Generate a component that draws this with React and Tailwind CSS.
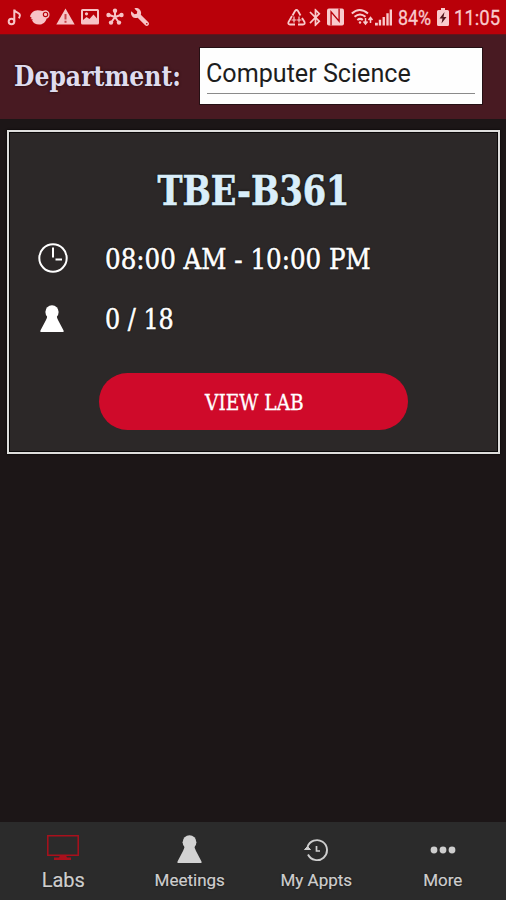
import React from "react";
import { FaWrench } from "react-icons/fa";
import { MdBluetooth } from "react-icons/md";

const slab = "font-['Roboto_Slab','DejaVu_Serif_Condensed','DejaVu_Serif',serif]";

// Status bar, left side
function NotificationIcons() {
  return (
    <div className="flex items-center h-[34px] text-[#f7c3c6]">
      <svg className="w-4 h-[18px]" viewBox="0 0 16 18" fill="none" stroke="currentColor" strokeWidth="2">
        <circle cx="4.5" cy="13.5" r="2.8" />
        <path d="M7.3 13.5V1.5c0 3.200 5.800 2.500 5.600 6-.1 1.2-.5 2-1.2 2.700" />
      </svg>
      <svg className="w-[20px] h-[18px] ml-[7px]" viewBox="0 0 21 18">
        <path fill="currentColor" d="M0 8.5C1 4.500 4 2 8 1.800c2 0 3.700.400 5 1L16 2c3 0 4.700 2.300 4.500 4.800-.2 2.200-1.500 3.400-3 3.700-1 3.800-4 6.400-8 6.400-3.500 0-6-1.600-7.300-4.200L3 11.500.5 11l1.500-1z" />
        <circle cx="16.300" cy="6.300" r="2.300" fill="none" stroke="#b90009" strokeWidth="1.200" />
      </svg>
      <svg className="w-[19px] h-[18px] ml-[6px]" viewBox="0 0 19 18">
        <path fill="currentColor" d="M9.500.5 18.700 16.500H.3z" />
        <path stroke="#c8444a" strokeWidth="2" d="M9.500 6v5.500M9.500 12.800v2" />
      </svg>
      <svg className="w-[18px] h-[18px] ml-[6px]" viewBox="0 0 18 18">
        <path fill="currentColor" fillRule="evenodd" d="M1.500 1h15Q18 1 18 2.500v12.500q0 1.500-1.500 1.500h-15Q0 16.500 0 15V2.500Q0 1 1.500 1zM2 3v9l3.500-3 3 2 4-4.500 3.500 4V3z" />
        <circle cx="5.500" cy="5.800" r="1.600" fill="currentColor" />
      </svg>
      <svg className="w-[18px] h-[18px] ml-[7px]" viewBox="0 0 18 18" fill="none" stroke="currentColor" strokeWidth="2">
        <path d="M9 9V3M9 9 3.300 7M9 9l5.700-2M9 9l-3.500 5M9 9l3.500 5" />
        <g fill="currentColor" strokeWidth="0">
          <circle cx="9" cy="2.700" r="2.200" />
          <circle cx="2.500" cy="7" r="2.200" />
          <circle cx="15.500" cy="7" r="2.200" />
          <circle cx="5" cy="14.600" r="2.200" />
          <circle cx="13" cy="14.600" r="2.200" />
        </g>
      </svg>
      <FaWrench className="w-[18px] h-[18px] ml-[7px] -scale-x-100" />
    </div>
  );
}

// Status bar, right side
function SystemIcons() {
  return (
    <div className="flex items-center h-[34px] text-[#f9cbcd]">
      <svg className="w-[19px] h-[17px]" viewBox="0 0 19 17" fill="none" stroke="currentColor" strokeWidth="1.800">
        <path d="M5.500 6.500 8 2q1.500-2 3 0l2.500 4.500M15 9l2.500 4q.8 2.500-1.500 2.500h-5M8 15.500H3Q.7 15.500 1.500 13L5 7" />
        <path d="M7 7.500v6M4.500 11h5M12 7.500v6M10 11h4.500" strokeWidth="1.200" />
      </svg>
      <MdBluetooth className="w-[21px] h-[21px] -ml-px" />
      <svg className="w-[17px] h-[18px] ml-px" viewBox="0 0 18 18">
        <path fill="currentColor" d="M2 0h14q2 0 2 2v14q0 2-2 2H2q-2 0-2-2V2q0-2 2-2z" />
        <path d="M4.300 18V3.500l8.500 10V0" fill="none" stroke="#b90009" strokeWidth="1.400" />
      </svg>
      <svg className="w-[23px] h-[18px] ml-[7px]" viewBox="0 0 23 18" fill="none" stroke="currentColor" strokeWidth="2">
        <path d="M.8 5.500Q8.500-1.500 17 5.500M3.500 8.800q5.500-4.500 11 0M6.300 12q3-2.300 5.500 0" />
        <circle cx="9" cy="14.500" r="1.200" fill="currentColor" stroke="none" />
        <path d="M14.500 10v5.500M12.500 13.500l2 2.500 2-2.500M19.500 15v-5M17.500 12l2-2.500 2 2.500" strokeWidth="1.500" />
      </svg>
      <svg className="w-[17px] h-[17px] ml-px" viewBox="0 0 18 17" fill="currentColor">
        <path d="M0 14h3v3H0zM4 11h2.500v6H4zM8 8h2.500v9H8zM12 4h2.500v13H12zM15.500 0H18v17h-2.500z" />
      </svg>
      <span className="ml-[6px] w-[34px] h-[34px] flex items-center">
        <span className="text-[20.500px] leading-[34px] pt-[1px] origin-left scale-x-[0.87] whitespace-nowrap [-webkit-text-stroke:0.3px_#f9cbcd]">84%</span>
      </span>
      <svg className="w-[12px] h-[18px] ml-[5px]" viewBox="0 0 12 18">
        <path fill="currentColor" d="M4 0h4v2h2.500Q12 2 12 3.500v13q0 1.500-1.500 1.500h-9Q0 18 0 16.500v-13Q0 2 1.500 2H4z" />
        <path fill="#50151a" d="M7.500 4 2.500 10.500h3L4.500 15.500l5-6.500h-3z" />
      </svg>
      <span className="ml-[5px] w-[47px] h-[34px] flex items-center">
        <span className="text-[21px] leading-[34px] pt-[1px] origin-left scale-x-[0.88] whitespace-nowrap [-webkit-text-stroke:0.3px_#f9cbcd]">11:05</span>
      </span>
    </div>
  );
}

function PawnIcon({ className }) {
  return (
    <svg className={className} viewBox="0 0 24 28" fill="currentColor">
      <circle cx="12" cy="7.200" r="6.900" />
      <path d="M7.300 10h9.400q.3 3.500 1.800 6L24 26.500V28H0v-1.500L5.500 16Q7 13.500 7.300 10z" />
    </svg>
  );
}

function ClockIcon() {
  return (
    <svg className="w-[30px] h-[30px]" viewBox="0 0 30 30" fill="none" stroke="currentColor" strokeWidth="2">
      <circle cx="15" cy="15" r="13.700" />
      <path d="M15 4.500V14.500M17.500 16.500h6.500" />
    </svg>
  );
}

const tabs = [
  {
    label: "Labs",
    labelClass: "text-[20px] top-0",
    icon: (
      <svg className="w-[32px] h-[26px] -mt-1 text-[#a9101c]" viewBox="0 0 32 26" fill="none" stroke="currentColor" strokeWidth="1.500">
        <path d="M.8.800h30.400v19.400H.8z" />
        <path d="M13 20.500h6l1 2h4v2.500H7v-2.500h5z" fill="currentColor" strokeWidth="0" />
      </svg>
    ),
  },
  {
    label: "Meetings",
    labelClass: "text-[17px] top-0",
    icon: <PawnIcon className="w-[25px] h-[28px] -mt-[2px] text-[#d2d2d2]" />,
  },
  {
    label: "My Appts",
    labelClass: "text-[17px] top-0",
    icon: (
      <svg className="w-[24px] h-[24px]" viewBox="0 0 24 24" fill="none" stroke="currentColor" strokeWidth="1.900">
        <path d="M3.500 9A10 10 0 1 1 4 16.500" />
        <path d="M.500 11.500 3.500 8.500l3 3z" fill="currentColor" strokeWidth="1" />
        <path d="M12.500 8v5H16" strokeWidth="1.700" />
      </svg>
    ),
  },
  {
    label: "More",
    labelClass: "text-[17px] top-0",
    icon: (
      <svg className="w-[26px] h-[8px]" viewBox="0 0 26 8" fill="currentColor">
        <circle cx="4" cy="4" r="3.400" />
        <circle cx="13" cy="4" r="3.400" />
        <circle cx="22" cy="4" r="3.400" />
      </svg>
    ),
  },
];

export default function App() {
  return (
    <div className="w-[506px] h-[900px] flex flex-col overflow-hidden bg-[#1c1617] font-[Roboto,sans-serif]">
      <div className="h-[34px] flex justify-between pl-[7px] pr-[5px] bg-[#b90009]">
        <NotificationIcons />
        <SystemIcons />
      </div>

      {/* Department picker */}
      <header className="h-[85px] flex items-start bg-[#481a22] border-t border-[#65131b]">
        <div className="w-[199px] pl-[14px] pt-[24px]">
          <span className={`${slab} inline-block font-bold text-[28px] leading-[36px] whitespace-nowrap origin-left scale-x-[0.935] text-[#dfdcee] [text-shadow:0_0_3px_#1c0609]`}>
            Department:
          </span>
        </div>
        <div className="w-[284px] h-[58px] mt-[12px] px-[7px] bg-[#fefefe] border border-[#251014]">
          <div className="h-[46px] pt-[8px] border-b border-[#8a8a8a] text-[25.500px] leading-[34px] text-[#1d1d1d] whitespace-nowrap">
            <span className="inline-block origin-left scale-x-[0.985] -ml-px">Computer Science</span>
          </div>
        </div>
      </header>

      <main className="flex-1 pl-[7px] pr-[6px] pt-[11px]">
        <section className="h-[324px] border-2 border-[#dededc] bg-[#2c2828] text-white flex flex-col [box-shadow:0_0_2px_#000,inset_0_0_0_1px_#0b0909]">
          <div className="mt-[33px] h-[52px] flex justify-center">
            <h1 className={`${slab} font-bold text-[41px] leading-[52px] whitespace-nowrap scale-x-[0.91] text-[#d9eefa] [text-shadow:0_0_3px_#000] [-webkit-text-stroke:0.6px_#d9eefa]`}>
              TBE-B361
            </h1>
          </div>
          <div className="mt-[11px] h-[60px] flex items-center pl-[29px]">
            <ClockIcon />
            <span className={`${slab} pt-[4px] ml-[37px] text-[27.500px] whitespace-nowrap origin-left scale-x-[0.993] [text-shadow:0_0_2px_#000] [-webkit-text-stroke:0.5px_#fff]`}>
              08:00 AM - 10:00 PM
            </span>
          </div>
          <div className="h-[60px] flex items-center pl-[31px]">
            <PawnIcon className="w-[24px] h-[27px]" />
            <span className={`${slab} pt-[4px] ml-[41px] text-[27.500px] whitespace-nowrap origin-left scale-x-[0.965] [text-shadow:0_0_2px_#000] [-webkit-text-stroke:0.5px_#fff]`}>
              0 / 18
            </span>
          </div>
          <button className="mt-[25px] ml-[90px] w-[309px] h-[57px] rounded-full bg-[#cf0a2a] flex items-center justify-center">
            <span className={`${slab} pt-[3px] pl-px text-[21.500px] whitespace-nowrap scale-x-[0.96] [-webkit-text-stroke:0.3px_#fff]`}>VIEW LAB</span>
          </button>
        </section>
      </main>

      <nav className="h-[78px] grid grid-cols-4 bg-[#2b2b2b] text-[#cecece]">
        {tabs.map((tab) => (
          <div key={tab.label} className="flex flex-col items-center">
            <div className="h-[46px] w-full pt-[9px] flex items-center justify-center">{tab.icon}</div>
            <span className={`relative leading-[24px] whitespace-nowrap [text-shadow:0_0_2px_#111] [-webkit-text-stroke:0.2px_#cecece] ${tab.labelClass}`}>{tab.label}</span>
          </div>
        ))}
      </nav>
    </div>
  );
}
